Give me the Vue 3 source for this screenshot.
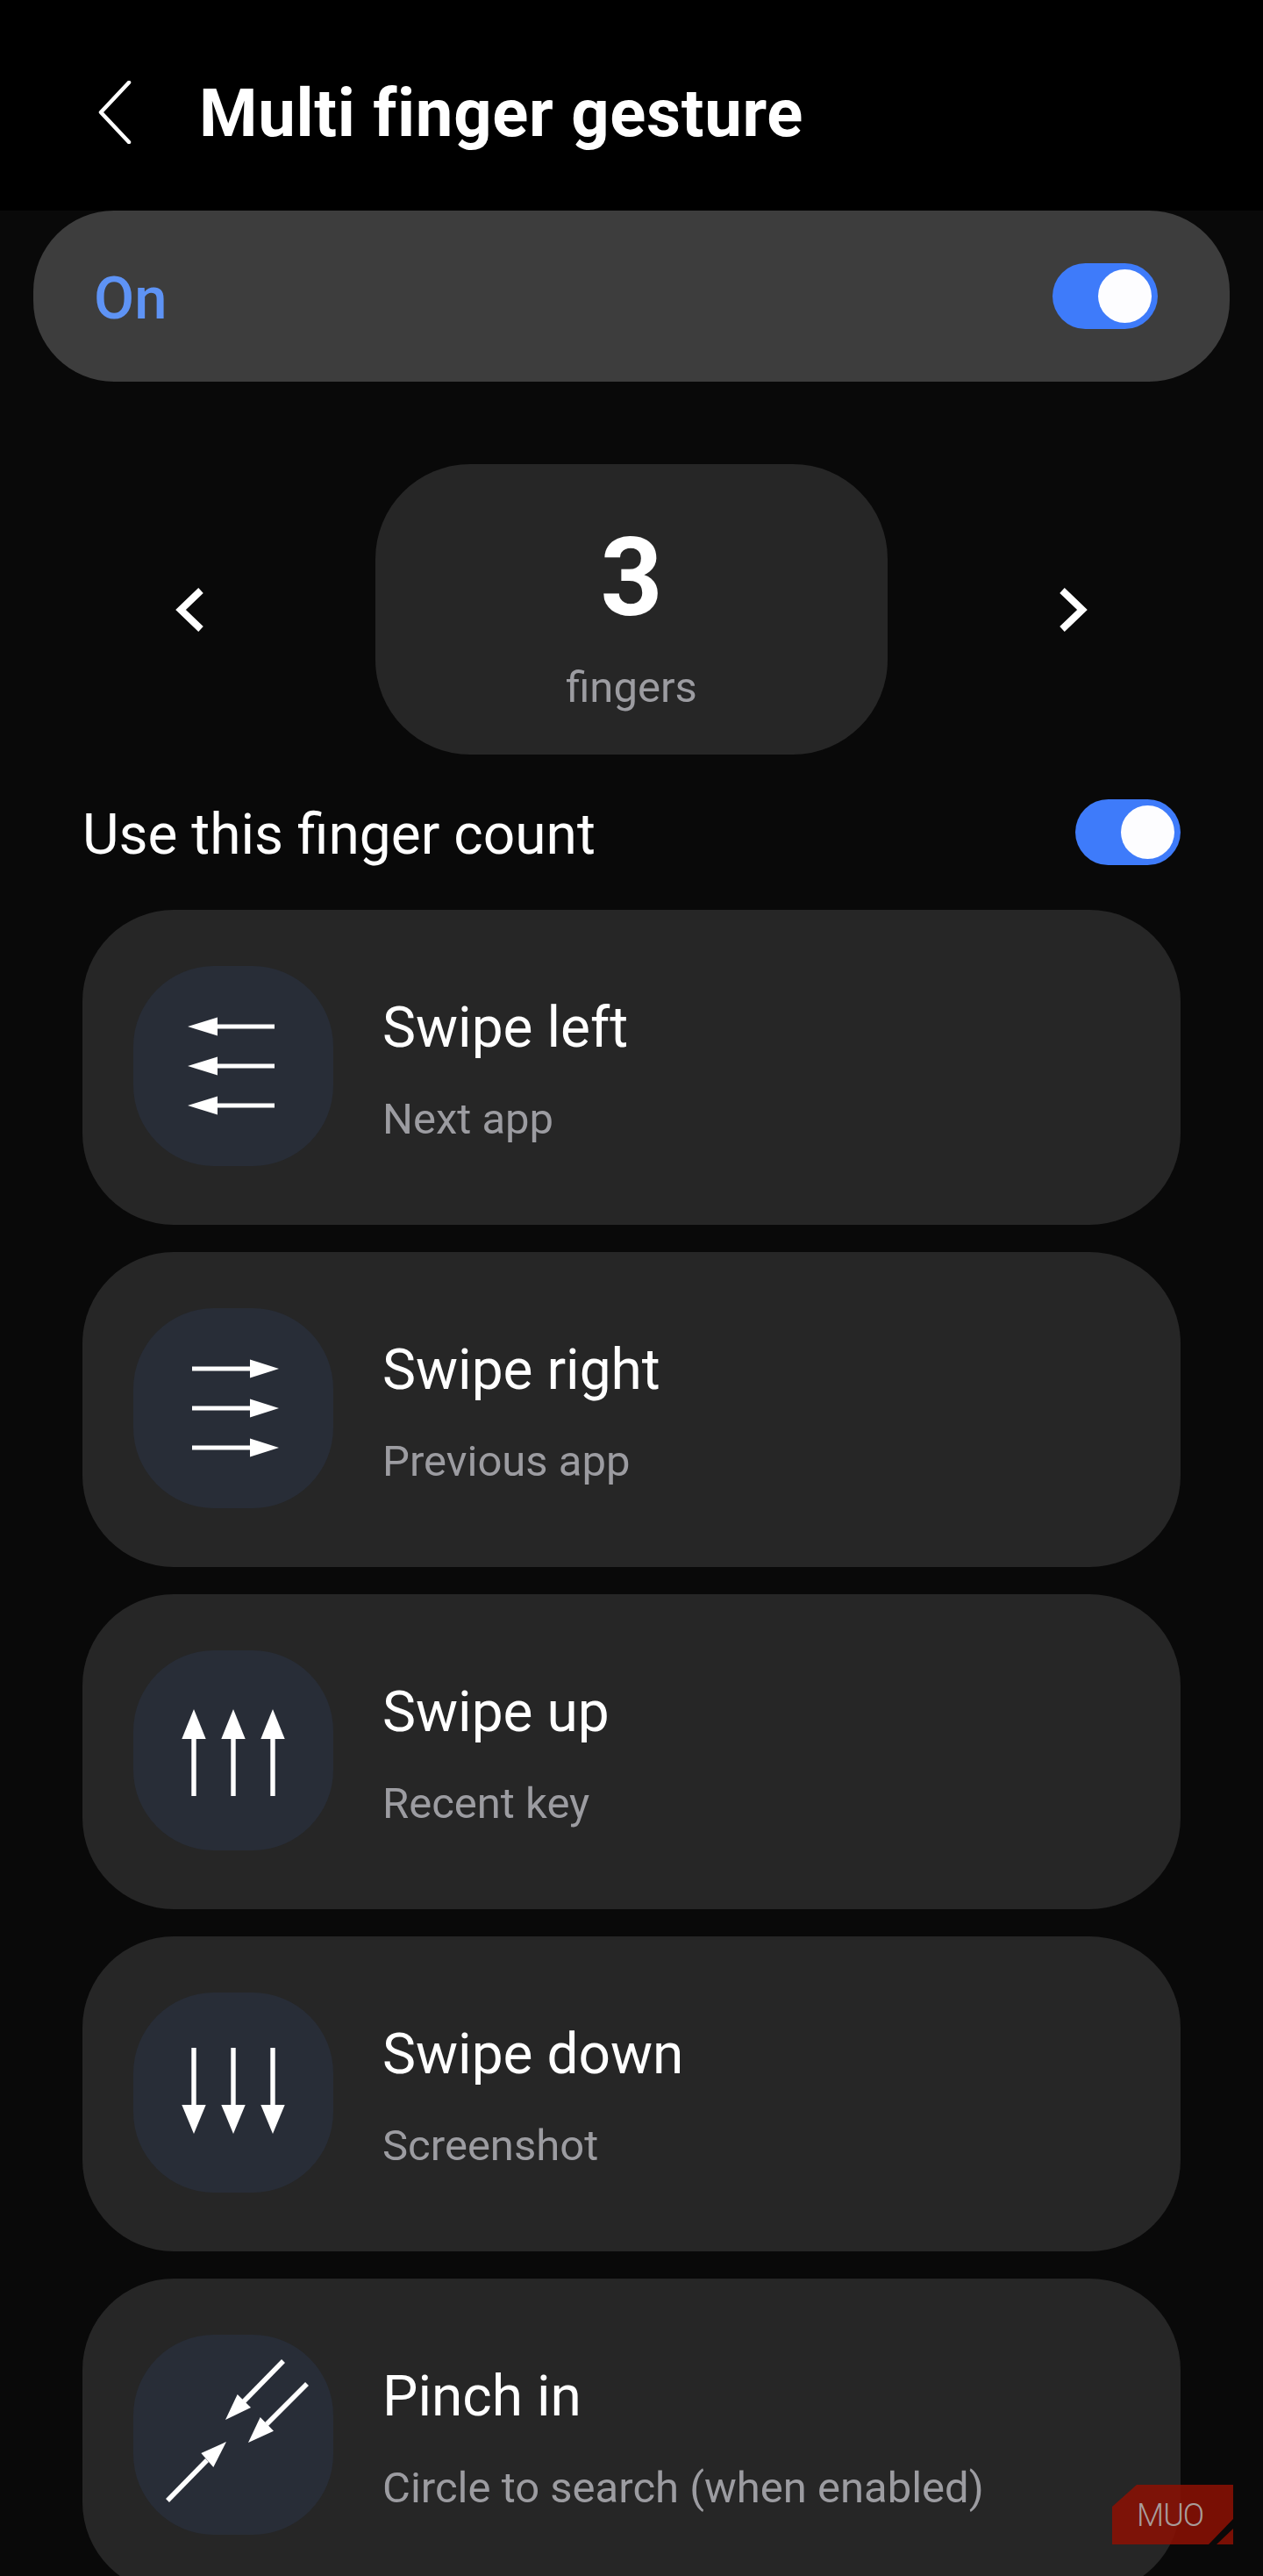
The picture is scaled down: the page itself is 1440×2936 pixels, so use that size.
<script setup>
const rows = [
  { title: 'Swipe left', sub: 'Next app', kind: 'left' },
  { title: 'Swipe right', sub: 'Previous app', kind: 'right' },
  { title: 'Swipe up', sub: 'Recent key', kind: 'up' },
  { title: 'Swipe down', sub: 'Screenshot', kind: 'down' },
  { title: 'Pinch in', sub: 'Circle to search (when enabled)', kind: 'pinch' }
]
</script>

<template>
  <div class="page">
    <header class="top">
      <svg class="back" width="40" height="72" viewBox="0 0 40 72"><path d="M36 2 L4 36 L36 70" fill="none" stroke="#fff" stroke-width="4.5" stroke-linecap="round" stroke-linejoin="round" /></svg>
      <h1>Multi finger gesture</h1>
    </header>
    <section class="master">
      <span class="on">On</span>
      <span class="switch"><i></i></span>
    </section>
    <section class="picker">
      <svg width="36" height="52" viewBox="0 0 36 52"><path d="M30 4 L7 26 L30 48" fill="none" stroke="#fff" stroke-width="8" /></svg>
      <div class="count">
        <b>3</b>
        <span>fingers</span>
      </div>
      <svg width="36" height="52" viewBox="0 0 36 52"><path d="M6 4 L29 26 L6 48" fill="none" stroke="#fff" stroke-width="8" /></svg>
    </section>
    <section class="use">
      <span class="use-label">Use this finger count</span>
      <span class="switch"><i></i></span>
    </section>
    <div class="list">
      <article v-for="r in rows" :key="r.kind" class="row">
        <div class="ico">
          <svg width="228" height="228" viewBox="0 0 228 228">
            <g v-if="r.kind === 'left'" fill="#fff">
              <g v-for="y in [69, 114, 159]" :key="y">
                <rect x="96" :y="y - 2.5" width="65" height="5" />
                <path :d="`M62 ${y} L96 ${y - 10.5} V${y + 10.5} Z`" />
              </g>
            </g>
            <g v-else-if="r.kind === 'right'" fill="#fff">
              <g v-for="y in [69, 114, 159]" :key="y">
                <rect x="67" :y="y - 2.5" width="66" height="5" />
                <path :d="`M166 ${y} L133 ${y - 10.5} V${y + 10.5} Z`" />
              </g>
            </g>
            <g v-else-if="r.kind === 'up'" fill="#fff">
              <g v-for="x in [69, 114, 159]" :key="x">
                <rect :x="x - 2.7" y="100" width="5.4" height="66" />
                <path :d="`M${x} 67 L${x - 13.7} 101 H${x + 13.7} Z`" />
              </g>
            </g>
            <g v-else-if="r.kind === 'down'" fill="#fff">
              <g v-for="x in [69, 114, 159]" :key="x">
                <rect :x="x - 2.7" y="63" width="5.4" height="66" />
                <path :d="`M${x} 161 L${x - 13.7} 128 H${x + 13.7} Z`" />
              </g>
            </g>
            <g v-else fill="#fff">
              <path d="M171 30 L126 76" stroke="#fff" stroke-width="5.5" />
              <path d="M105 97 L118.7 68 L134 83 Z" />
              <path d="M198 56 L152 102" stroke="#fff" stroke-width="5.5" />
              <path d="M131 123 L144.7 94 L160 109.7 Z" />
              <path d="M39 189 L84 143" stroke="#fff" stroke-width="5.5" />
              <path d="M106 122 L77.3 135 L91.3 151 Z" />
            </g>
          </svg>
        </div>
        <div class="txt">
          <div class="t">{{ r.title }}</div>
          <div class="s">{{ r.sub }}</div>
        </div>
      </article>
    </div>
    <svg class="wm" width="138" height="68" viewBox="0 0 138 68">
      <path d="M28 0 H138 V39 L110 68 H0 V25 Z" fill="#8c1004" fill-opacity="0.86" />
      <path d="M138 50 V68 H119 Z" fill="#8c1004" fill-opacity="0.86" />
      <text x="28" y="47" class="wmt">MUO</text>
    </svg>
  </div>
</template>

<style>
html, body { margin: 0; background: #090909; }
</style>

<style scoped>
.page {
  position: relative;
  width: 1440px;
  height: 2936px;
  overflow: hidden;
  background: #090909;
  color: #fff;
  font-family: Roboto, "Liberation Sans", sans-serif;
}
.top {
  height: 240px;
  background: #000;
  display: flex;
  align-items: center;
  padding-left: 111px;
  box-sizing: border-box;
}
.back { flex: none; margin-top: 16px; }
h1 {
  margin: 18px 0 0 76px;
  font-size: 76px;
  font-weight: 700;
  line-height: 1;
  letter-spacing: 0.7px;
}
.master {
  margin: 0 38px;
  height: 195px;
  border-radius: 92px;
  background: #3d3d3d;
  display: flex;
  align-items: center;
  justify-content: space-between;
  padding: 0 82px 0 69px;
}
.on {
  margin-top: 4px;
  color: #5e93f5;
  font-size: 67px;
  font-weight: 500;
}
.switch {
  position: relative;
  display: block;
  width: 120px;
  height: 75px;
  border-radius: 38px;
  background: #3e7bfa;
}
.switch i {
  position: absolute;
  top: 7px;
  right: 7px;
  width: 61px;
  height: 61px;
  border-radius: 50%;
  background: #fdfdff;
}
.picker {
  margin-top: 94px;
  height: 331px;
  display: flex;
  align-items: center;
  justify-content: center;
}
.picker svg { flex: none; }
.picker svg:first-child { margin-right: 193px; }
.picker svg:last-child { margin-left: 193px; }
.count {
  width: 584px;
  height: 331px;
  border-radius: 108px;
  background: #262626;
  display: flex;
  flex-direction: column;
  align-items: center;
}
.count b {
  margin-top: 68px;
  font-size: 124px;
  line-height: 1;
  font-weight: 700;
}
.count span {
  margin-top: 34px;
  font-size: 49px;
  line-height: 1.2;
  color: #9c9ca1;
}
.use {
  margin: 51px 94px 0;
  height: 75px;
  display: flex;
  align-items: center;
  justify-content: space-between;
  font-size: 64px;
}
.use-label { margin-top: 5px; }
.list {
  margin-top: 51px;
  padding: 0 94px;
  display: flex;
  flex-direction: column;
  gap: 31px;
}
.row {
  height: 359px;
  box-sizing: border-box;
  border-radius: 104px;
  background: #262626;
  display: flex;
  align-items: flex-start;
  padding: 64px 0 0 58px;
  flex: none;
}
.ico {
  width: 228px;
  height: 228px;
  border-radius: 92px;
  background: #282d37;
  flex: none;
}
.ico svg { display: block; }
.txt { margin: 35px 0 0 56px; }
.t { font-size: 64px; line-height: 72px; }
.s { margin-top: 40px; font-size: 49px; line-height: 56px; color: #9c9ca1; }
.wm {
  position: absolute;
  left: 1268px;
  top: 2832px;
}
.wmt {
  font-family: Roboto, sans-serif;
  font-weight: 300;
  font-size: 36px;
  fill: #a89c9a;
  letter-spacing: -1px;
}
</style>
